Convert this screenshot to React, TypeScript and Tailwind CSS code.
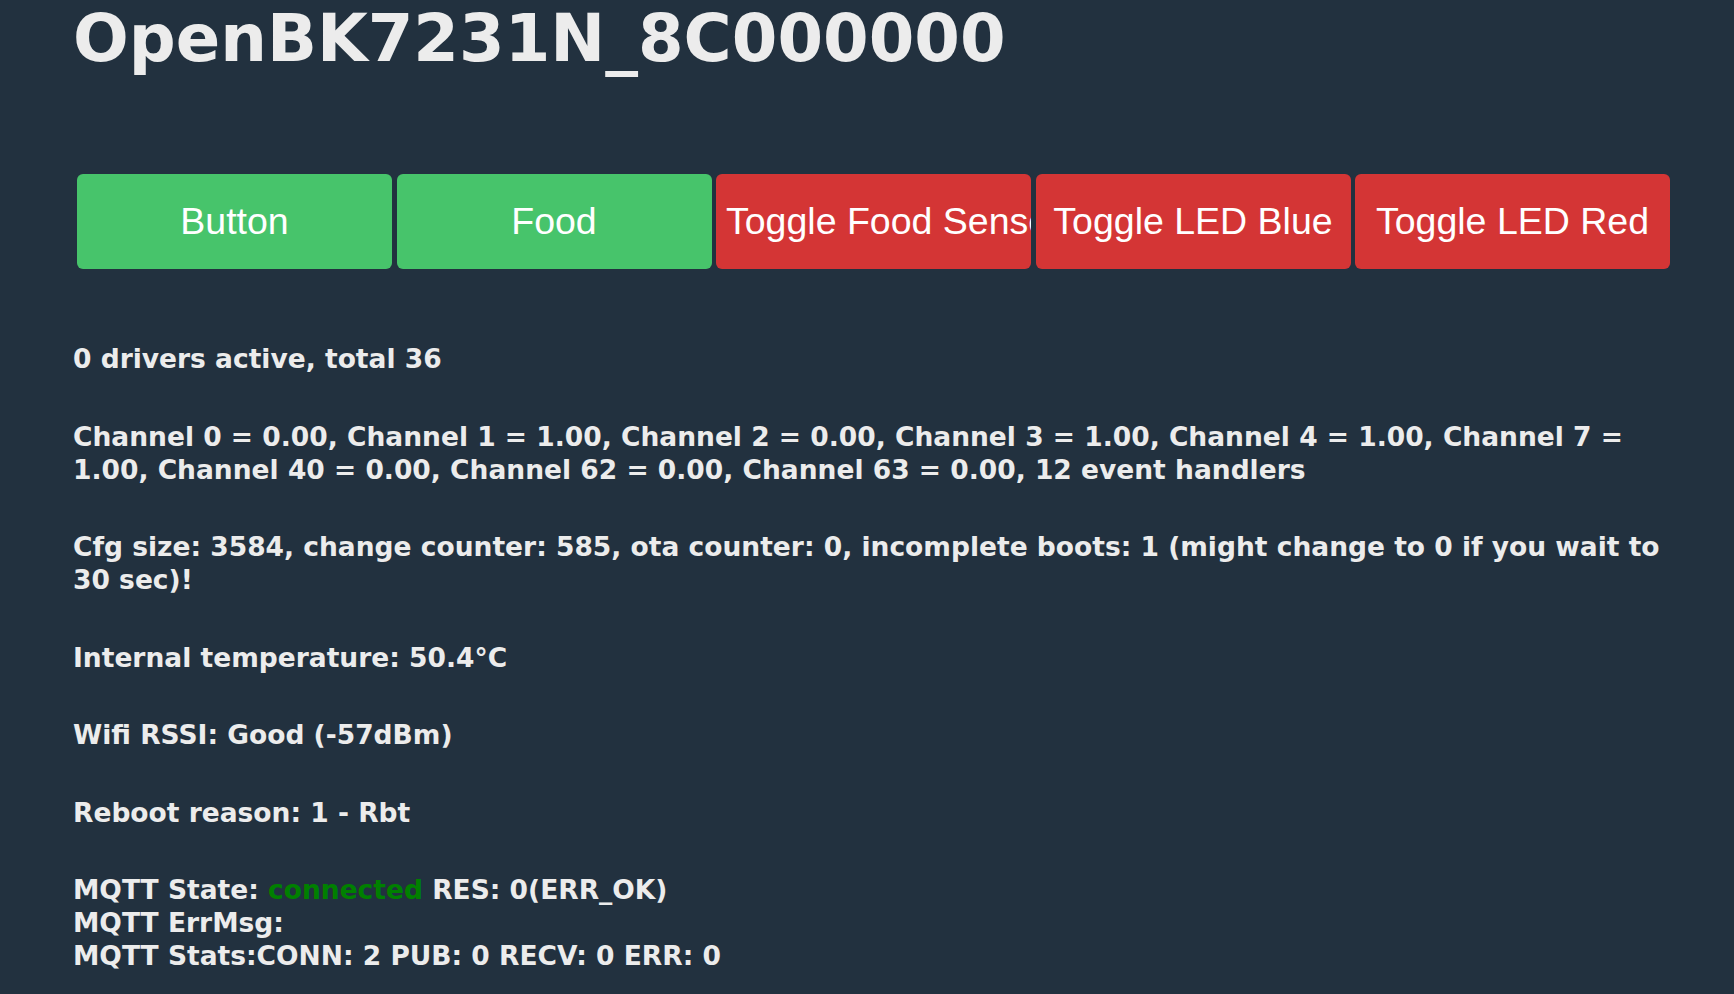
const buttons = [
  { label: "Button", color: "bg-[#47c46b]" },
  { label: "Food", color: "bg-[#47c46b]" },
  { label: "Toggle Food Sensor", color: "bg-[#d43535]" },
  { label: "Toggle LED Blue", color: "bg-[#d43535]" },
  { label: "Toggle LED Red", color: "bg-[#d43535]" },
];

export default function App() {
  return (
    <div className="min-h-screen bg-[#22313f] pt-[6px] text-[#ececec] font-['DejaVu_Sans',Verdana,sans-serif]">
      <div className="w-[1670px] pl-[73px] pb-10">
        <h1 className="text-[65.6px] font-bold leading-none">OpenBK7231N_8C000000</h1>

        <div className="mt-[102px] ml-[4px] flex gap-[4.5px]">
          {buttons.map((b) => (
            <div
              key={b.label}
              className={`${b.color} h-[95px] flex-1 overflow-hidden whitespace-nowrap rounded-[6px] px-[10px] text-center font-['Liberation_Sans',Arial,sans-serif] text-[37.5px] leading-[95px] text-white`}
            >
              {b.label}
            </div>
          ))}
        </div>

        <div className="mt-[73.5px] text-[26.5px] font-bold leading-[33px]">
          <p>0 drivers active, total 36</p>
          <p className="mt-[44.5px]">
            Channel 0 = 0.00, Channel 1 = 1.00, Channel 2 = 0.00, Channel 3 = 1.00, Channel 4 = 1.00, Channel 7 = 1.00,
            Channel 40 = 0.00, Channel 62 = 0.00, Channel 63 = 0.00, 12 event handlers
          </p>
          <p className="mt-[44.5px]">
            Cfg size: 3584, change counter: 585, ota counter: 0, incomplete boots: 1 (might change to 0 if you wait to 30
            sec)!
          </p>
          <p className="mt-[44.5px]">Internal temperature: 50.4°C</p>
          <p className="mt-[44.5px]">Wifi RSSI: Good (-57dBm)</p>
          <p className="mt-[44.5px]">Reboot reason: 1 - Rbt</p>
          <p className="mt-[44.5px]">
            MQTT State: <span className="text-[#008000]">connected</span> RES: 0(ERR_OK)
            <br />
            MQTT ErrMsg:
            <br />
            MQTT Stats:CONN: 2 PUB: 0 RECV: 0 ERR: 0
          </p>
        </div>
      </div>
    </div>
  );
}
